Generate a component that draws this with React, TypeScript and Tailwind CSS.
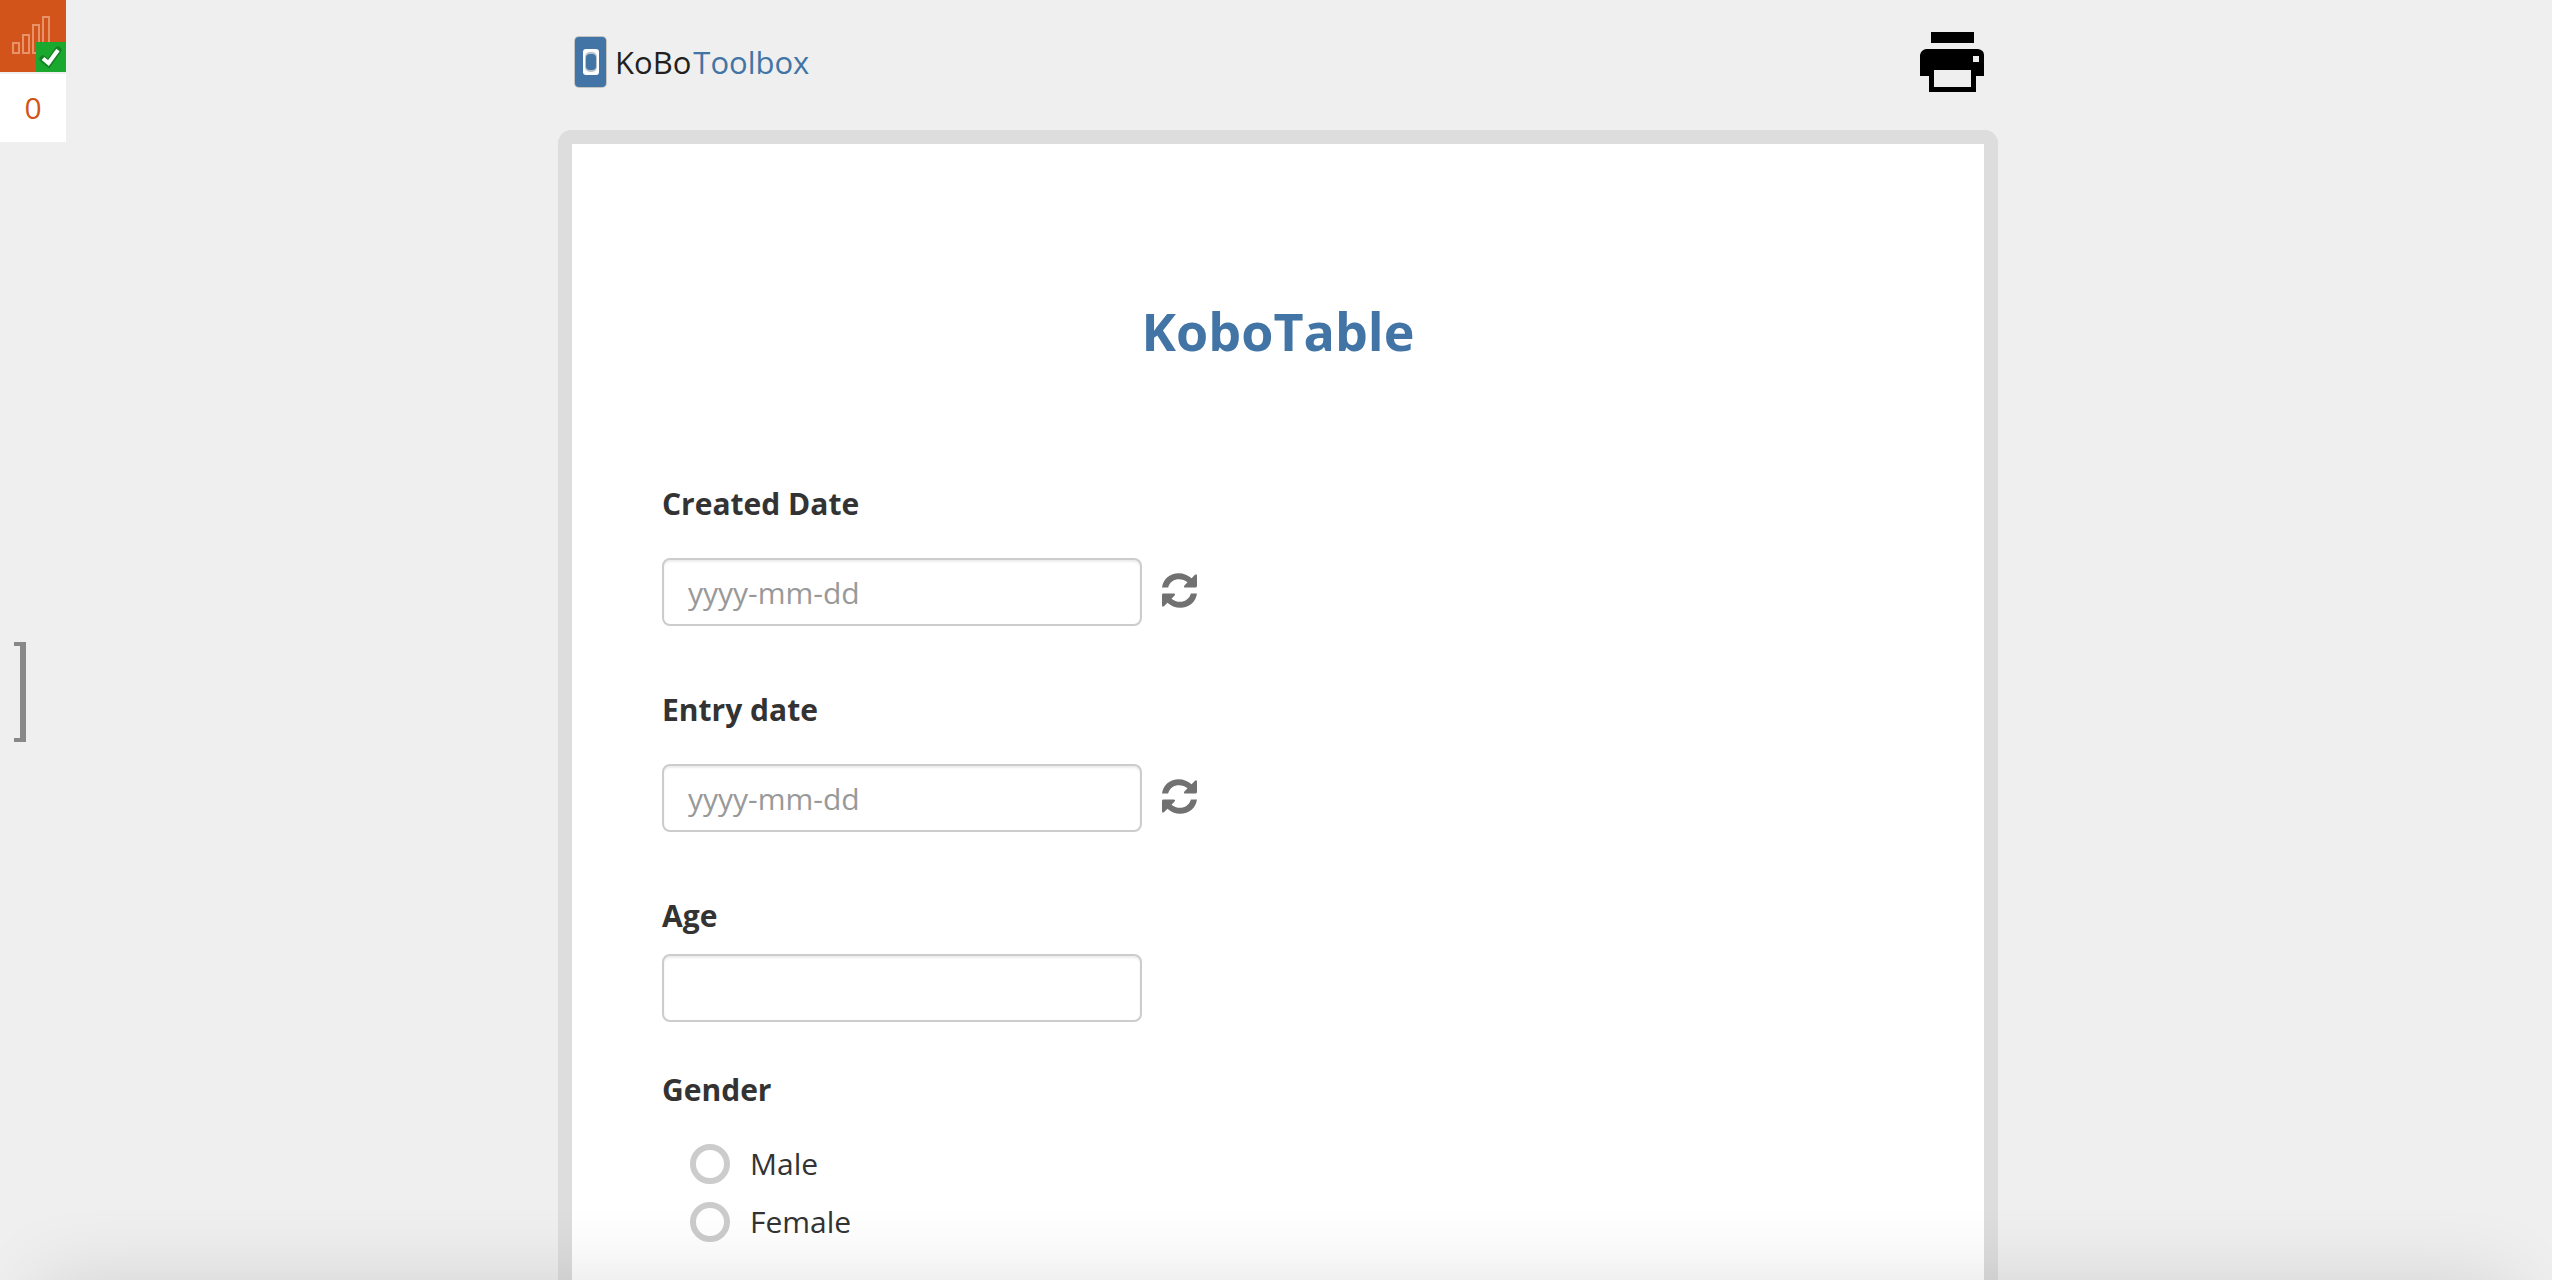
import React, { useState } from "react";

const GENDERS = ["Male", "Female"];

function StatusBars() {
  return (
    <div className="h-[72px] bg-[#d2541a]">
      <svg viewBox="0 0 66 72" className="block w-full h-full" fill="none">
        <g stroke="#e8926a" strokeWidth="2">
          <rect x="13" y="43" width="6" height="10" />
          <rect x="23" y="35" width="6" height="18" />
          <rect x="33" y="25" width="6" height="28" />
          <rect x="43" y="17" width="6" height="36" />
        </g>
        <rect x="36" y="42" width="30" height="30" fill="#1ba82e" />
        <path
          d="M43 59 L48.500 63.500 L58 50"
          stroke="#0d6a1a"
          strokeWidth="7"
          strokeLinecap="round"
          opacity="0.6"
        />
        <path d="M43 58.500 L48.500 63 L58 50" stroke="#fff" strokeWidth="4" />
      </svg>
    </div>
  );
}

function Logo() {
  return (
    <a href="#" aria-label="KoBo Toolbox" className="flex items-center gap-1.5">
      <svg viewBox="0 0 37 54" className="w-[37px] h-[54px]">
        <rect x="2" y="1" width="33" height="52" rx="5" fill="#c4c4c0" />
        <rect x="3" y="2" width="31" height="50" rx="4" fill="#4275a5" />
        <rect x="11" y="14" width="16" height="26" rx="3" fill="#fff" />
        <rect x="13" y="17" width="12" height="20" rx="5" fill="#b9c3cb" />
        <rect x="14" y="19" width="10" height="16" rx="4" fill="#4275a5" />
      </svg>
      <span className="flex gap-0.5 text-[31px] leading-[40px]">
        <span className="text-[#231f20]">KoBo</span>
        <span className="text-[#4275a5]">Toolbox</span>
      </span>
    </a>
  );
}

function PrintIcon() {
  return (
    <svg viewBox="0 0 64 60" className="w-16 h-[60px]">
      <rect x="11" y="0" width="43" height="11" />
      <path
        fillRule="evenodd"
        d="M6 17H58Q64 18 64 23V44H56V60H9V44H0V23Q1 18 6 17ZM14 38V55H51V38ZM53 24V30H59V24Z"
      />
    </svg>
  );
}

const ARROW =
  "M0 42C4 16 24 0 49 0C64 0 77 6 87 15L97 5Q103 1 103 8V38Q103 42 99 42H69Q62 42 66 36L75 27C58 12 26 14 18 42Z";

function ResetIcon() {
  return (
    <svg viewBox="0 0 103 102" className="w-[35px] h-[35px]" fill="currentColor">
      <path d={ARROW} />
      <path d={ARROW} transform="rotate(180 51.5 51)" />
    </svg>
  );
}

function DateField({ id, label }: { id: string; label: string }) {
  const [value, setValue] = useState("");

  return (
    <div className="mb-16">
      <label htmlFor={id} className="block font-bold">
        {label}
      </label>
      <div className="flex items-center gap-5 mt-[34px]">
        <input
          id={id}
          type="text"
          placeholder="yyyy-mm-dd"
          value={value}
          onChange={(e) => setValue(e.target.value)}
          className="w-[480px] h-[68px] px-6 border-2 border-[#ccc] rounded-lg bg-white shadow-[inset_0_2px_2px_rgba(0,0,0,0.075)] placeholder:text-[#999] focus:outline-none"
        />
        <button
          type="button"
          aria-label={`Reset ${label}`}
          onClick={() => setValue("")}
          className="pb-1 text-[#717171]"
        >
          <ResetIcon />
        </button>
      </div>
    </div>
  );
}

export default function App() {
  const [age, setAge] = useState("");
  const [gender, setGender] = useState("");

  return (
    <div
      className="grid grid-cols-[66px_1fr_62px] min-h-screen bg-[#efefef] text-[#333] text-[30px] leading-[40px]"
      style={{ fontFamily: '"Open Sans", "Noto Sans", sans-serif' }}
    >
      {/* QUEUE STATUS */}
      <aside>
        <StatusBars />
        <div className="flex items-center justify-center h-[68px] mt-0.5 bg-white text-[#d2541a]">
          0
        </div>
        <button
          type="button"
          aria-label="Open side panel"
          className="block w-3 h-[100px] mt-[500px] ml-3.5 border-y-4 border-r-6 border-[#888]"
        />
      </aside>

      <main className="flex flex-col w-full max-w-[1440px] mx-auto">
        {/* HEADER */}
        <header className="flex items-center justify-between h-[130px] px-3.5 pb-1.5">
          <Logo />
          <button type="button" aria-label="Print">
            <PrintIcon />
          </button>
        </header>

        {/* FORM */}
        <form className="flex-1 px-[90px] pt-[151px] bg-white border-x-14 border-t-14 border-[#ddd] rounded-t-[14px]">
          <h1 className="mb-[117px] text-center text-[52px] leading-[72px] font-bold text-[#4275a5]">
            KoboTable
          </h1>

          <DateField id="created" label="Created Date" />
          <DateField id="entry" label="Entry date" />

          <div className="mb-12">
            <label htmlFor="age" className="block font-bold">
              Age
            </label>
            <input
              id="age"
              type="text"
              value={age}
              onChange={(e) => setAge(e.target.value)}
              className="block w-[480px] h-[68px] mt-[18px] px-6 border-2 border-[#ccc] rounded-lg bg-white shadow-[inset_0_2px_2px_rgba(0,0,0,0.075)] focus:outline-none"
            />
          </div>

          <fieldset>
            <legend className="font-bold">Gender</legend>
            <div className="flex flex-col gap-[18px] mt-[34px] pl-7">
              {GENDERS.map((item) => (
                <label key={item} className="flex items-center gap-5">
                  <input
                    type="radio"
                    name="gender"
                    value={item}
                    checked={gender === item}
                    onChange={() => setGender(item)}
                    className="appearance-none w-10 h-10 border-6 border-[#ccc] rounded-full bg-white checked:bg-[#4275a5]"
                  />
                  {item}
                </label>
              ))}
            </div>
          </fieldset>
        </form>
      </main>

      {/* shade along the bottom of the window */}
      <div className="fixed inset-x-0 bottom-0 h-[120px] overflow-hidden pointer-events-none">
        <div className="absolute top-full inset-x-10 h-[200px] shadow-[0_0_80px_rgba(0,0,0,0.12)]" />
      </div>
    </div>
  );
}
